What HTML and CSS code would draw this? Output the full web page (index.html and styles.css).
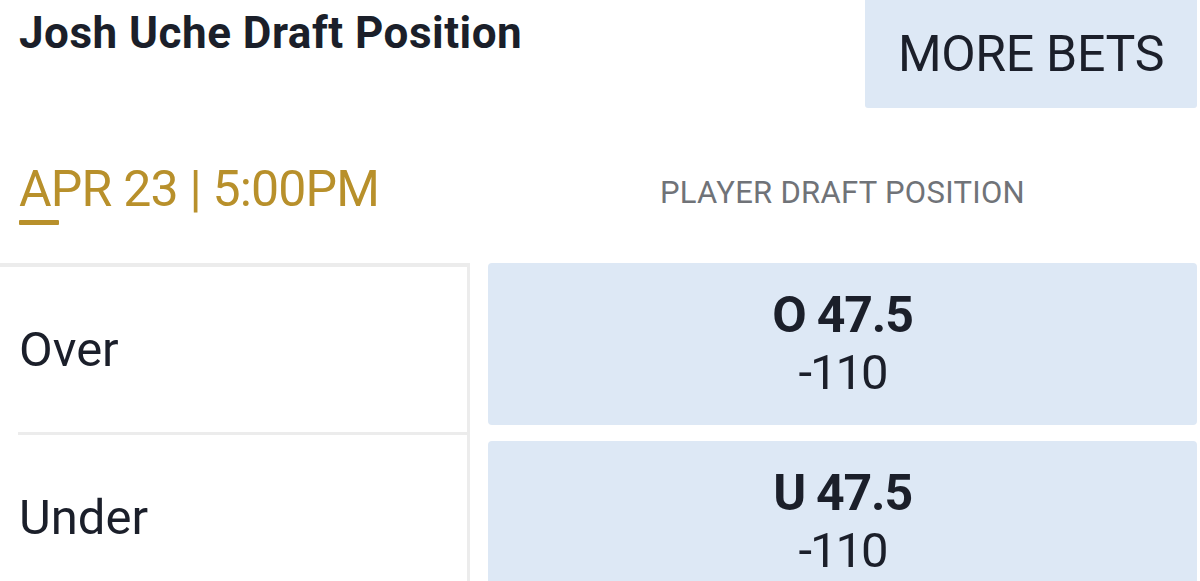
FILE: index.html
```html
<!DOCTYPE html>
<html lang="en">
<head>
  <meta charset="UTF-8">
  <title>Josh Uche Draft Position</title>
  <link rel="stylesheet" href="styles.css">
</head>
<body>

  <div class="event">
    <div class="header">
      <h1 class="title">Josh Uche Draft Position</h1>
      <button class="more-bets">MORE BETS</button>
    </div>

    <div class="meta">
      <div class="date">
        <span>APR 23 | 5:00PM</span>
        <div class="date-bar"></div>
      </div>
      <div class="market-name">PLAYER DRAFT POSITION</div>
    </div>

    <div class="market">
      <div class="sides">
        <div class="side">Over</div>
        <div class="side">Under</div>
      </div>
      <div class="odds">
        <button class="odd">
          <span class="line">O 47.5</span>
          <span class="price">-110</span>
        </button>
        <button class="odd">
          <span class="line">U 47.5</span>
          <span class="price">-110</span>
        </button>
      </div>
    </div>
  </div>

</body>
</html>
```

FILE: styles.css
```css
body {
  margin: 0;
  background: #fff;
  font-family: Roboto, 'Liberation Sans', sans-serif;
  color: #1b1f2a;
  overflow: hidden;
}

.header {
  display: flex;
  justify-content: space-between;
  height: 108px;
}

.title {
  margin: 0;
  padding: 7px 0 0 19px;
  font-size: 44px;
  font-weight: 700;
  line-height: 52px;
  letter-spacing: 0.5px;
}

.more-bets {
  width: 332px;
  margin-right: 3px;
  border: none;
  border-radius: 0 0 3px 3px;
  background: #dde8f5;
  color: #1b1f2a;
  font-family: inherit;
  font-size: 50px;
  font-weight: 400;
  letter-spacing: -0.3px;
  padding: 0;
  cursor: pointer;
}

.meta {
  display: grid;
  grid-template-columns: 488px 1fr;
  height: 155px;
  padding-right: 3px;
}

.date {
  padding: 51px 0 0 19px;
  color: #b8902b;
  font-size: 50px;
  line-height: 60px;
  letter-spacing: -0.8px;
}

.date-bar {
  width: 40px;
  height: 5px;
  margin-top: 1px;
  background: #b8902b;
  border-radius: 1px;
}

.market-name {
  padding-top: 65px;
  text-align: center;
  color: #707378;
  font-size: 31px;
  line-height: 40px;
  letter-spacing: 0.3px;
}

.market {
  display: flex;
  gap: 18px;
}

.sides {
  width: 467px;
  border-top: 4px solid #ececec;
  border-right: 3px solid #ececec;
}

.side {
  display: flex;
  align-items: center;
  height: 165px;
  padding-left: 19px;
  font-size: 49px;
}

.side + .side {
  margin-left: 18px;
  padding-left: 1px;
  border-top: 3px solid #ececec;
}

.odds {
  flex: 1;
  display: flex;
  flex-direction: column;
  gap: 16px;
  margin-right: 3px;
}

.odd {
  display: flex;
  flex-direction: column;
  align-items: center;
  justify-content: center;
  height: 162px;
  border: none;
  border-radius: 4px;
  background: #dde8f5;
  color: #1b1f2a;
  font-family: inherit;
  cursor: pointer;
}

.line {
  font-size: 50px;
  font-weight: 700;
  line-height: 58px;
  letter-spacing: -1.2px;
}

.price {
  font-size: 49px;
  line-height: 58px;
  letter-spacing: -2px;
}
```
